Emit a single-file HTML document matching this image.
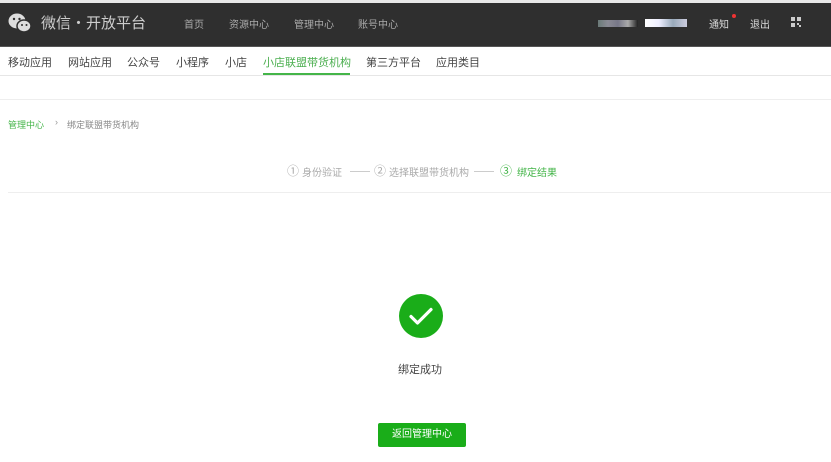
<!DOCTYPE html>
<html><head><meta charset="utf-8"><style>
*{margin:0;padding:0;box-sizing:border-box}
body{width:831px;height:462px;background:#fff;font-family:"Liberation Sans","Noto Sans CJK SC",sans-serif;position:relative;overflow:hidden;color:#333}
.a{position:absolute;white-space:nowrap}
#top{position:absolute;left:0;top:0;width:831px;height:3px;background:#e8e8e8}
#hd{position:absolute;left:0;top:3px;width:831px;height:44px;background:#2f2f2f;border-bottom:1px solid #555}
.hn{font-size:10px;color:#aaa;top:13px}
.nv{font-size:11px;color:#444;top:54px}
.st{font-size:10px;color:#aaa;top:164px}
.ln{position:absolute;top:171px;width:20px;height:1px;background:#ccc}
</style></head><body>
<div id="top"></div>
<div id="hd">
<svg class="a" style="left:8px;top:9px" width="24" height="22" viewBox="0 0 24 22"><ellipse cx="9" cy="9" rx="8.5" ry="7.5" fill="#ddd"/><ellipse cx="16" cy="14" rx="7" ry="6" fill="#ddd" stroke="#2f2f2f" stroke-width="1.5"/><circle cx="6" cy="7" r="1.2" fill="#2f2f2f"/><circle cx="11.5" cy="7" r="1.2" fill="#2f2f2f"/><circle cx="14" cy="13" r="1" fill="#2f2f2f"/><circle cx="18.5" cy="13" r="1" fill="#2f2f2f"/></svg>
<div class="a" style="left:41px;top:9px;font-size:15px;color:#ccc">微信・开放平台</div>
<div class="a hn" style="left:184px">首页</div>
<div class="a hn" style="left:229px">资源中心</div>
<div class="a hn" style="left:294px">管理中心</div>
<div class="a hn" style="left:358px">账号中心</div>
<div class="a" style="left:598px;top:17px;width:40px;height:7px;background:linear-gradient(90deg,#6a7a78,#8a8a94,#778,#aaa,#222)"></div>
<div class="a" style="left:645px;top:16px;width:42px;height:8px;background:linear-gradient(90deg,#fff,#eef,#9ab,#ccd)"></div>
<div class="a" style="left:709px;top:13px;font-size:10px;color:#ddd">通知</div>
<div class="a" style="left:732px;top:11px;width:4px;height:4px;border-radius:2px;background:#e33"></div>
<div class="a" style="left:750px;top:13px;font-size:10px;color:#ddd">退出</div>
<svg class="a" style="left:791px;top:14px" width="10" height="11" viewBox="0 0 10 11"><rect x="0" y="0" width="4" height="4" fill="#ccc"/><rect x="6" y="0" width="4" height="4" fill="#ccc"/><rect x="0" y="6" width="4" height="4" fill="#ccc"/><rect x="6" y="6" width="2" height="2" fill="#ccc"/><rect x="8" y="8" width="2" height="2" fill="#ccc"/></svg>
</div>
<div class="a nv" style="left:8px">移动应用</div>
<div class="a nv" style="left:68px">网站应用</div>
<div class="a nv" style="left:127px">公众号</div>
<div class="a nv" style="left:176px">小程序</div>
<div class="a nv" style="left:225px">小店</div>
<div class="a nv" style="left:263px;color:#4caf50">小店联盟带货机构</div>
<div class="a nv" style="left:366px">第三方平台</div>
<div class="a nv" style="left:436px">应用类目</div>
<div class="a" style="left:0;top:75px;width:831px;height:1px;background:#e6e6e6"></div>
<div class="a" style="left:263px;top:73px;width:87px;height:2px;background:#44b549"></div>
<div class="a" style="left:0;top:99px;width:831px;height:1px;background:#eee"></div>
<div class="a" style="left:8px;top:118px;font-size:9px;color:#44b549">管理中心</div>
<div class="a" style="left:55px;top:117px;font-size:9px;color:#999">›</div>
<div class="a" style="left:67px;top:118px;font-size:9px;color:#888">绑定联盟带货机构</div>
<div class="a st" style="left:287px;font-size:12px;top:162px">①</div>
<div class="a st" style="left:302px">身份验证</div>
<div class="ln" style="left:350px"></div>
<div class="a st" style="left:374px;font-size:12px;top:162px">②</div>
<div class="a st" style="left:389px">选择联盟带货机构</div>
<div class="ln" style="left:474px"></div>
<div class="a st" style="left:500px;font-size:12px;top:162px;color:#44b549">③</div>
<div class="a st" style="left:517px;color:#44b549">绑定结果</div>
<div class="a" style="left:8px;top:192px;width:823px;height:1px;background:#eee"></div>
<svg class="a" style="left:399px;top:294px" width="44" height="44" viewBox="0 0 44 44"><circle cx="22" cy="22" r="22" fill="#1aad19"/><path d="M12 22.5l6.5 6.5 13.5-13.5" fill="none" stroke="#fff" stroke-width="3.2" stroke-linecap="round" stroke-linejoin="round"/></svg>
<div class="a" style="left:398px;top:361px;font-size:11px;color:#444">绑定成功</div>
<div class="a" style="left:378px;top:423px;width:88px;height:24px;background:#1aad19;border-radius:2px;color:#fff;font-size:10px;text-align:center;line-height:24px">返回管理中心</div>
</body></html>
